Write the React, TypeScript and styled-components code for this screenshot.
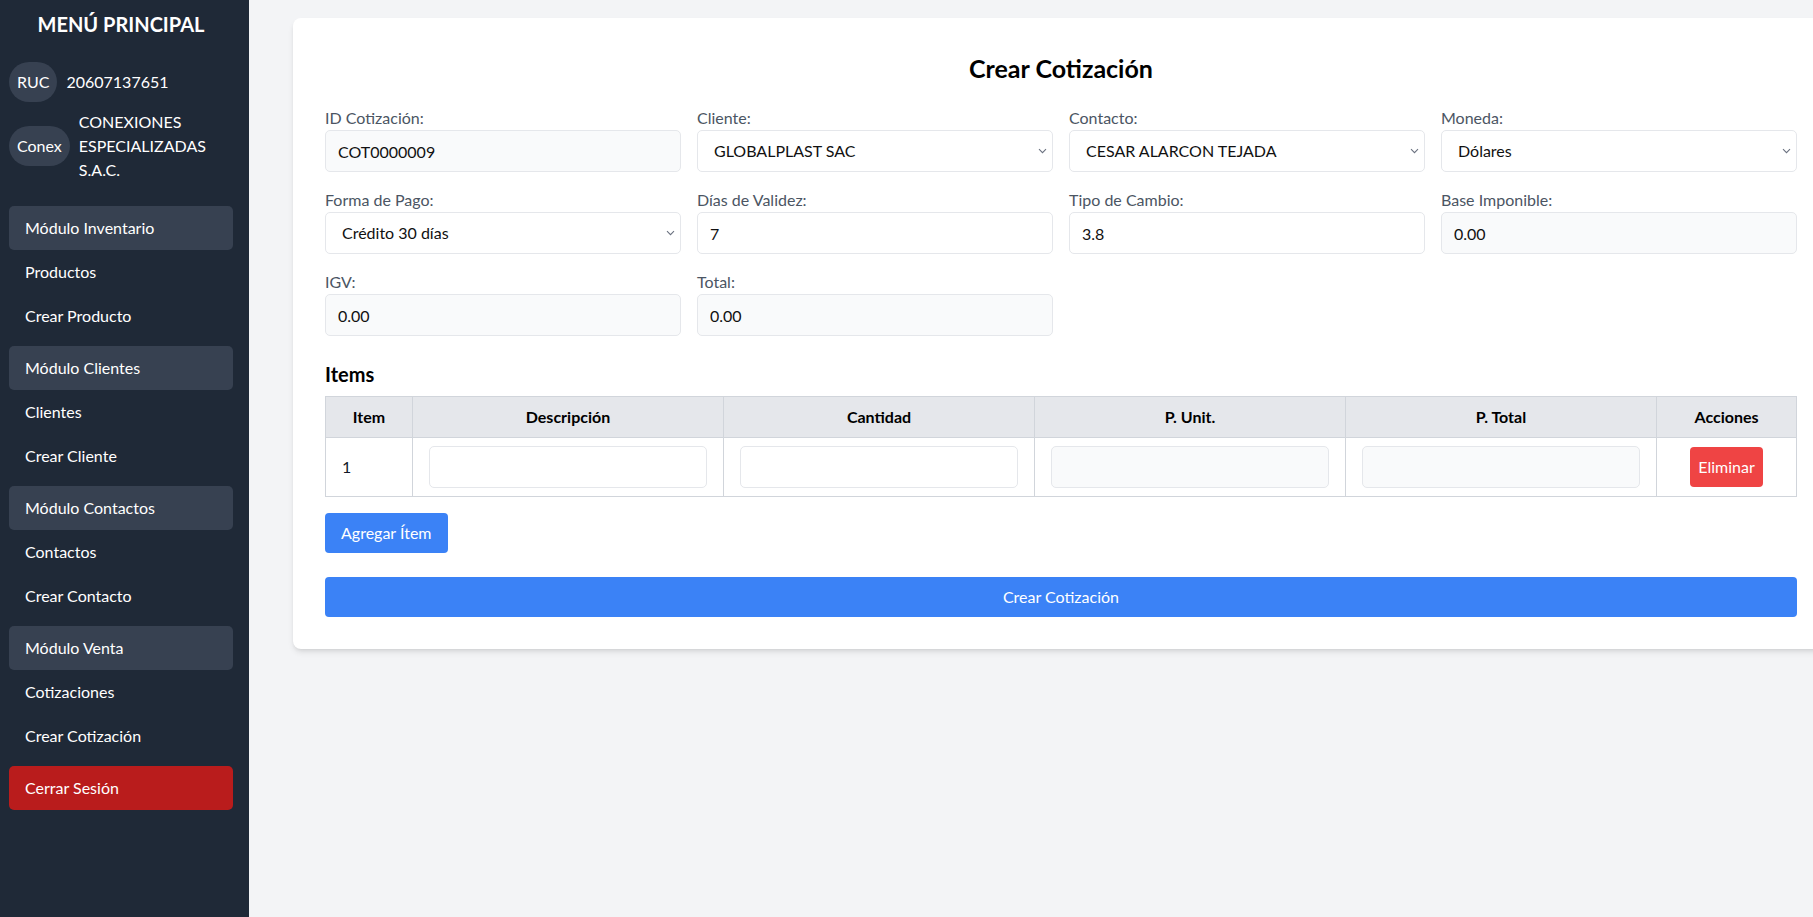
import React from "react";
import styled, { createGlobalStyle } from "styled-components";

const GlobalStyle = createGlobalStyle`
  html, body { margin: 0; padding: 0; height: 100%; }
  body {
    font-family: "Lato", "Noto Sans", sans-serif;
    font-size: 16px;
    line-height: 24px;
    color: #111827;
    background: #f3f4f6;
  }
  #root { height: 100%; }
  *, *::before, *::after { box-sizing: border-box; }
`;

const Layout = styled.div`
  display: flex;
  height: 100vh;
  overflow: hidden;
`;

const Sidebar = styled.aside`
  width: 249px;
  flex-shrink: 0;
  background: #1f2937;
  color: #ffffff;
  padding: 10px 16px 0 9px;
  display: flex;
  flex-direction: column;
`;

const SideTitle = styled.h1`
  margin: 0 0 24px;
  font-size: 20px;
  line-height: 28px;
  font-weight: 700;
  text-align: center;
`;

const InfoRow = styled.div`
  display: flex;
  align-items: center;
  gap: 9px;
  margin-bottom: 8px;
`;

const Pill = styled.span`
  background: #374151;
  border-radius: 9999px;
  height: 40px;
  padding: 0 8px;
  display: inline-flex;
  align-items: center;
  flex-shrink: 0;
`;

const InfoText = styled.span`
  line-height: 24px;
`;

const Nav = styled.nav`
  margin-top: 16px;
  display: flex;
  flex-direction: column;
`;

const Group = styled.div`
  display: flex;
  flex-direction: column;
  margin-bottom: 8px;
`;

const NavItem = styled.div<{ $variant?: "module" | "link" | "danger" }>`
  height: 44px;
  padding: 0 16px;
  display: flex;
  align-items: center;
  border-radius: 5px;
  color: #ffffff;
  background: ${(p) =>
    p.$variant === "module" ? "#374151" : p.$variant === "danger" ? "#b91c1c" : "transparent"};
`;

const Main = styled.main`
  flex: 1;
  min-width: 0;
  padding: 18px 0 0 44px;
  overflow: hidden;
  background: #f3f4f6;
`;

const Card = styled.section`
  width: 1536px;
  background: #ffffff;
  border-radius: 8px;
  box-shadow: 0 4px 6px -1px rgba(0, 0, 0, 0.1), 0 2px 4px -2px rgba(0, 0, 0, 0.1);
  padding: 32px;
`;

const Title = styled.h2`
  margin: 0 0 20px;
  font-size: 25px;
  line-height: 36px;
  font-weight: 700;
  text-align: center;
  color: #000;
`;

const FormGrid = styled.div`
  display: grid;
  grid-template-columns: repeat(4, 1fr);
  gap: 16px;
`;

const Field = styled.div`
  display: flex;
  flex-direction: column;
`;

const Label = styled.label`
  font-size: 16px;
  line-height: 24px;
  color: #4b5563;
`;

const Input = styled.input<{ $readOnly?: boolean }>`
  width: 100%;
  height: 42px;
  padding: 8px 12px;
  border: 1px solid #e5e7eb;
  border-radius: 5px;
  font-family: inherit;
  font-size: 16px;
  line-height: 24px;
  color: #111;
  background: ${(p) => (p.$readOnly ? "#f9fafb" : "#ffffff")};
  outline: none;
`;

const SelectWrap = styled.div`
  position: relative;
`;

const Select = styled.select`
  width: 100%;
  height: 42px;
  padding: 8px 24px 8px 16px;
  border: 1px solid #e5e7eb;
  border-radius: 5px;
  font-family: inherit;
  font-size: 16px;
  line-height: 24px;
  color: #111;
  background: #ffffff;
  appearance: none;
  -webkit-appearance: none;
  outline: none;
`;

const Chevron = styled.svg`
  position: absolute;
  right: 6px;
  top: 50%;
  transform: translateY(-50%);
  pointer-events: none;
`;

const SectionTitle = styled.h3`
  margin: 24px 0 8px;
  font-size: 20px;
  line-height: 28px;
  font-weight: 700;
  color: #000;
`;

const Table = styled.table`
  width: 100%;
  border-collapse: collapse;
  table-layout: fixed;
`;

const Th = styled.th<{ $w?: number }>`
  width: ${(p) => (p.$w ? `${p.$w}px` : "auto")};
  background: #e5e7eb;
  border: 1px solid #d1d5db;
  padding: 8px 16px;
  font-weight: 700;
  text-align: center;
  line-height: 24px;
  color: #000;
`;

const Td = styled.td<{ $center?: boolean }>`
  border: 1px solid #d1d5db;
  padding: 8px 16px;
  line-height: 24px;
  text-align: ${(p) => (p.$center ? "center" : "left")};
`;

const Button = styled.button<{ $color?: "blue" | "red"; $block?: boolean }>`
  display: ${(p) => (p.$block ? "block" : "inline-block")};
  width: ${(p) => (p.$block ? "100%" : "auto")};
  border: none;
  border-radius: 4px;
  padding: ${(p) => (p.$color === "red" ? "8px 8px" : "8px 16px")};
  font-family: inherit;
  font-size: 16px;
  line-height: 24px;
  color: #ffffff;
  background: ${(p) => (p.$color === "red" ? "#ef4444" : "#3b82f6")};
  cursor: pointer;
`;

const AddRow = styled.div`
  margin-top: 16px;
`;

const SubmitRow = styled.div`
  margin-top: 24px;
`;

const ChevronIcon = () => (
  <Chevron width="9" height="6" viewBox="0 0 9 6" fill="none">
    <path d="M1 1.2 L4.5 4.7 L8 1.2" stroke="#6b7280" strokeWidth="1.1" />
  </Chevron>
);

const SelectField = ({ label, value }: { label: string; value: string }) => (
  <Field>
    <Label>{label}</Label>
    <SelectWrap>
      <Select defaultValue={value}>
        <option>{value}</option>
      </Select>
      <ChevronIcon />
    </SelectWrap>
  </Field>
);

const InputField = ({ label, value, readOnly }: { label: string; value: string; readOnly?: boolean }) => (
  <Field>
    <Label>{label}</Label>
    <Input defaultValue={value} readOnly={readOnly} $readOnly={readOnly} />
  </Field>
);

const groups = [
  { title: "Módulo Inventario", links: ["Productos", "Crear Producto"] },
  { title: "Módulo Clientes", links: ["Clientes", "Crear Cliente"] },
  { title: "Módulo Contactos", links: ["Contactos", "Crear Contacto"] },
  { title: "Módulo Venta", links: ["Cotizaciones", "Crear Cotización"] },
];

export default function App() {
  return (
    <>
      <GlobalStyle />
      <Layout>
        <Sidebar>
          <SideTitle>MENÚ PRINCIPAL</SideTitle>
          <InfoRow>
            <Pill>RUC</Pill>
            <InfoText>20607137651</InfoText>
          </InfoRow>
          <InfoRow>
            <Pill>Conex</Pill>
            <InfoText>CONEXIONES ESPECIALIZADAS S.A.C.</InfoText>
          </InfoRow>
          <Nav>
            {groups.map((g) => (
              <Group key={g.title}>
                <NavItem $variant="module">{g.title}</NavItem>
                {g.links.map((l) => (
                  <NavItem key={l} $variant="link">
                    {l}
                  </NavItem>
                ))}
              </Group>
            ))}
            <NavItem $variant="danger">Cerrar Sesión</NavItem>
          </Nav>
        </Sidebar>
        <Main>
          <Card>
            <Title>Crear Cotización</Title>
            <FormGrid>
              <InputField label="ID Cotización:" value="COT0000009" readOnly />
              <SelectField label="Cliente:" value="GLOBALPLAST SAC" />
              <SelectField label="Contacto:" value="CESAR ALARCON TEJADA" />
              <SelectField label="Moneda:" value="Dólares" />
              <SelectField label="Forma de Pago:" value="Crédito 30 días" />
              <InputField label="Días de Validez:" value="7" />
              <InputField label="Tipo de Cambio:" value="3.8" />
              <InputField label="Base Imponible:" value="0.00" readOnly />
              <InputField label="IGV:" value="0.00" readOnly />
              <InputField label="Total:" value="0.00" readOnly />
            </FormGrid>
            <SectionTitle>Items</SectionTitle>
            <Table>
              <thead>
                <tr>
                  <Th $w={87}>Item</Th>
                  <Th>Descripción</Th>
                  <Th>Cantidad</Th>
                  <Th>P. Unit.</Th>
                  <Th>P. Total</Th>
                  <Th $w={140}>Acciones</Th>
                </tr>
              </thead>
              <tbody>
                <tr>
                  <Td>1</Td>
                  <Td>
                    <Input />
                  </Td>
                  <Td>
                    <Input />
                  </Td>
                  <Td>
                    <Input readOnly $readOnly />
                  </Td>
                  <Td>
                    <Input readOnly $readOnly />
                  </Td>
                  <Td $center>
                    <Button $color="red">Eliminar</Button>
                  </Td>
                </tr>
              </tbody>
            </Table>
            <AddRow>
              <Button $color="blue">Agregar Ítem</Button>
            </AddRow>
            <SubmitRow>
              <Button $color="blue" $block>
                Crear Cotización
              </Button>
            </SubmitRow>
          </Card>
        </Main>
      </Layout>
    </>
  );
}
